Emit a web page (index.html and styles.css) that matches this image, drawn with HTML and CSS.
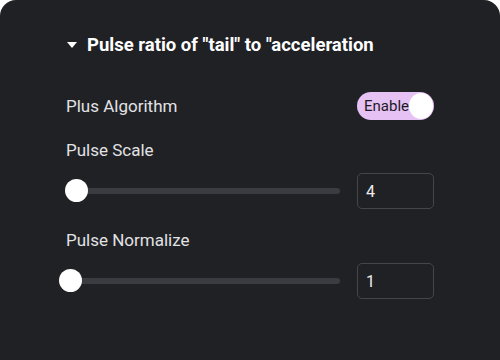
FILE: index.html
```html
<!DOCTYPE html>
<html>
<head>
<meta charset="utf-8">
<link rel="stylesheet" href="styles.css">
</head>
<body>
<div class="panel">
  <div class="heading">
    <span class="caret"></span>
    <span class="heading-text">Pulse ratio of "tail" to "acceleration</span>
  </div>
  <div class="row toggle-row">
    <span class="label">Plus Algorithm</span>
    <div class="toggle">
      <span class="toggle-text">Enable</span>
      <span class="knob"></span>
    </div>
  </div>
  <div class="label label-block first">Pulse Scale</div>
  <div class="row slider-row">
    <div class="slider">
      <div class="track"></div>
      <div class="thumb" style="left: 10.5px"></div>
    </div>
    <div class="input">4</div>
  </div>
  <div class="label label-block">Pulse Normalize</div>
  <div class="row slider-row">
    <div class="slider">
      <div class="track"></div>
      <div class="thumb" style="left: 4.5px"></div>
    </div>
    <div class="input">1</div>
  </div>
</div>
</body>
</html>
```
FILE: styles.css
```css
html, body {
  margin: 0;
  padding: 0;
  background: #ffffff;
}
.panel {
  width: 500px;
  height: 360px;
  box-sizing: border-box;
  background: #202125;
  border-radius: 16px 16px 0 0;
  padding: 28px 66px 0 66px;
  font-family: Roboto, "Liberation Sans", sans-serif;
  color: #e4e4e6;
}
.heading {
  height: 34px;
  display: flex;
  align-items: center;
}
.caret {
  width: 0;
  height: 0;
  border-left: 5px solid transparent;
  border-right: 5px solid transparent;
  border-top: 6px solid #ffffff;
  margin-left: 1px;
  margin-right: 10px;
}
.heading-text {
  font-weight: 700;
  font-size: 18.5px;
  color: #ffffff;
}
.row {
  display: flex;
  align-items: center;
  justify-content: space-between;
}
.toggle-row {
  margin-top: 30px;
  height: 28px;
}
.label {
  font-size: 17px;
  color: #e2e2e4;
}
.label-block {
  height: 20px;
  line-height: 20px;
  margin-top: 21px;
}
.label-block.first {
  margin-top: 20px;
}
.toggle {
  width: 77px;
  height: 28px;
  box-sizing: border-box;
  border-radius: 14px;
  background: #e6c1f3;
  display: flex;
  align-items: center;
  justify-content: space-between;
  padding: 0 1px 0 7px;
}
.toggle-text {
  font-size: 15px;
  color: #1c1b1f;
}
.knob {
  width: 26px;
  height: 26px;
  border-radius: 50%;
  background: #ffffff;
}
.slider-row {
  margin-top: 13px;
  height: 36px;
}
.slider {
  position: relative;
  width: 274px;
  height: 24px;
  display: flex;
  align-items: center;
}
.track {
  width: 100%;
  height: 6px;
  border-radius: 3px;
  background: #3b3c41;
}
.thumb {
  position: absolute;
  top: 0;
  width: 23px;
  height: 23px;
  margin-left: -11.5px;
  border-radius: 50%;
  background: #ffffff;
}
.input {
  width: 77px;
  height: 36px;
  box-sizing: border-box;
  border: 1px solid #45464b;
  border-radius: 5px;
  padding-left: 8px;
  display: flex;
  align-items: center;
  font-size: 16px;
  color: #ececee;
}
```
